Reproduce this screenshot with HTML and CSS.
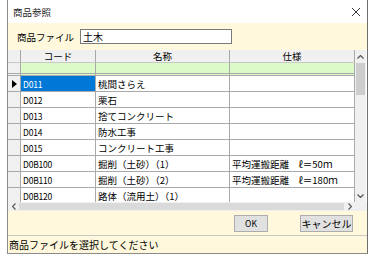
FILE: index.html
```html
<!DOCTYPE html>
<html lang="ja">
<head>
<meta charset="utf-8">
<link rel="stylesheet" href="styles.css">
</head>
<body>
<div class="dialog">
  <div class="titlebar">
    <span class="title">商品参照</span>
    <svg class="close" width="10" height="10" viewBox="0 0 10 10"><path d="M1 1 L9 9 M9 1 L1 9" stroke="#333" stroke-width="1" fill="none"/></svg>
  </div>
  <div class="filerow">
    <span class="label">商品ファイル</span>
    <div class="input">土木</div>
  </div>
  <div class="grid">
    <div class="gridmain">
      <div class="table">
        <div class="c rh hd"></div><div class="c hd">コード</div><div class="c hd">名称</div><div class="c hd">仕様</div>
        <div class="c rh flt"></div><div class="c flt"></div><div class="c flt"></div><div class="c flt"></div>
        <div class="c rh cur"><svg width="5" height="8" viewBox="0 0 5 8"><path d="M0 0 L5 4 L0 8 Z" fill="#000"/></svg></div><div class="c code sel">D011</div><div class="c">桃間さらえ</div><div class="c"></div>
        <div class="c rh"></div><div class="c code">D012</div><div class="c">栗石</div><div class="c"></div>
        <div class="c rh"></div><div class="c code">D013</div><div class="c">捨てコンクリート</div><div class="c"></div>
        <div class="c rh"></div><div class="c code">D014</div><div class="c">防水工事</div><div class="c"></div>
        <div class="c rh"></div><div class="c code">D015</div><div class="c">コンクリート工事</div><div class="c"></div>
        <div class="c rh"></div><div class="c code">D0B100</div><div class="c">掘削（土砂）（1）</div><div class="c">平均運搬距離　ℓ＝50ｍ</div>
        <div class="c rh"></div><div class="c code">D0B110</div><div class="c">掘削（土砂）（2）</div><div class="c">平均運搬距離　ℓ＝180ｍ</div>
        <div class="c rh"></div><div class="c code">D0B120</div><div class="c">路体（流用土）（1）</div><div class="c"></div>
      </div>
      <div class="vscroll">
        <div class="arrow up"><svg width="7" height="4" viewBox="0 0 7 4"><path d="M0.5 3.5 L3.5 0.5 L6.5 3.5" stroke="#555" stroke-width="1.2" fill="none"/></svg></div>
        <div class="vthumb"></div>
        <div class="vtrack"></div>
        <div class="arrow down"><svg width="7" height="4" viewBox="0 0 7 4"><path d="M0.5 0.5 L3.5 3.5 L6.5 0.5" stroke="#555" stroke-width="1.2" fill="none"/></svg></div>
      </div>
    </div>
    <div class="hscroll">
      <div class="harrow"><svg width="4" height="7" viewBox="0 0 4 7"><path d="M3.5 0.5 L0.5 3.5 L3.5 6.5" stroke="#555" stroke-width="1.2" fill="none"/></svg></div>
      <div class="hthumb"></div>
      <div class="harrow"><svg width="4" height="7" viewBox="0 0 4 7"><path d="M0.5 0.5 L3.5 3.5 L0.5 6.5" stroke="#555" stroke-width="1.2" fill="none"/></svg></div>
      <div class="corner"></div>
    </div>
  </div>
  <div class="buttons">
    <div class="btn ok">OK</div>
    <div class="btn cancel">キャンセル</div>
  </div>
  <div class="status">商品ファイルを選択してください</div>
</div>
</body>
</html>
```
FILE: styles.css
```css
* { box-sizing: border-box; }
html, body { margin: 0; padding: 0; background: #fff; }
body {
  font-family: "Noto Sans CJK JP", "Noto Sans", sans-serif;
  font-size: 9.5px;
  color: #000;
}
.dialog {
  margin-left: 7px;
  width: 361px;
  height: 254px;
  border-left: 1px solid #8a8a8a;
  border-right: 1px solid #6e6e6e;
  border-bottom: 1px solid #8a8a8a;
  display: flex;
  flex-direction: column;
  background: #fff8dc;
}
.titlebar {
  height: 23px;
  flex: none;
  background: #fff;
  display: flex;
  align-items: center;
  justify-content: space-between;
  padding: 0 6px 0 5px;
}
.title { color: #222; }
.filerow {
  height: 27px;
  flex: none;
  display: flex;
  align-items: center;
  padding-left: 9px;
  gap: 6px;
}
.input {
  width: 152px;
  height: 15px;
  border: 1px solid #7a7a7a;
  background: #fff;
  line-height: 13px;
  padding-left: 2px;
  font-size: 10px;
}
.grid {
  height: 161px;
  flex: none;
  display: flex;
  flex-direction: column;
  background: #fff;
}
.gridmain {
  height: 152px;
  flex: none;
  display: flex;
  overflow: hidden;
}
.table {
  width: 347px;
  display: grid;
  grid-template-columns: 13px 75px 134px 125px;
  grid-template-rows: 13px 13px repeat(8, 16px);
  align-content: start;
  overflow: hidden;
}
.c {
  border-right: 1px solid #a9a9a9;
  border-bottom: 1px solid #a9a9a9;
  background: #fff;
  display: flex;
  align-items: center;
  padding-left: 2px;
  white-space: nowrap;
  overflow: hidden;
}
.rh { background: #f0f0f0; padding-left: 0; justify-content: center; }
.hd { background: #f0f0f0; justify-content: center; padding-left: 0; border-bottom-color: #c8c8c8; }
.flt { background: #dcfac8; border-bottom: 3px double #a9a9a9; }
.rh.flt { background: #f0f0f0; }
.code { font-size: 8.5px; letter-spacing: -0.2px; }
.sel { background: #0078d7; color: #fff; }
.cur svg { display: block; }
.vscroll {
  width: 11px;
  display: flex;
  flex-direction: column;
  background: #f0f0f0;
}
.arrow {
  height: 13px;
  display: flex;
  align-items: center;
  justify-content: center;
}
.vthumb { height: 32px; background: #cdcdcd; margin: 0 1px; }
.vtrack { flex: 1; }
.hscroll {
  height: 9px;
  flex: none;
  display: flex;
  background: #f0f0f0;
}
.harrow {
  width: 11px;
  display: flex;
  align-items: center;
  justify-content: center;
}
.hthumb { flex: 1; background: #dadada; margin: 1px 0; }
.corner { width: 12px; background: #f0f0f0; }
.buttons {
  height: 24px;
  flex: none;
  display: flex;
  align-items: center;
  justify-content: flex-start;
}
.btn {
  height: 17px;
  flex: none;
  background: #e1e1e1;
  border: 1px solid #adadad;
  display: flex;
  align-items: center;
  justify-content: center;
}
.ok { width: 34px; margin-left: 226px; font-size: 8.5px; }
.cancel { width: 53px; margin-left: 32px; font-size: 10px; }
.status {
  flex: 1;
  border-top: 1px solid #c8c8c8;
  display: flex;
  align-items: center;
  padding-left: 1px;
  font-size: 10px;
}
```
